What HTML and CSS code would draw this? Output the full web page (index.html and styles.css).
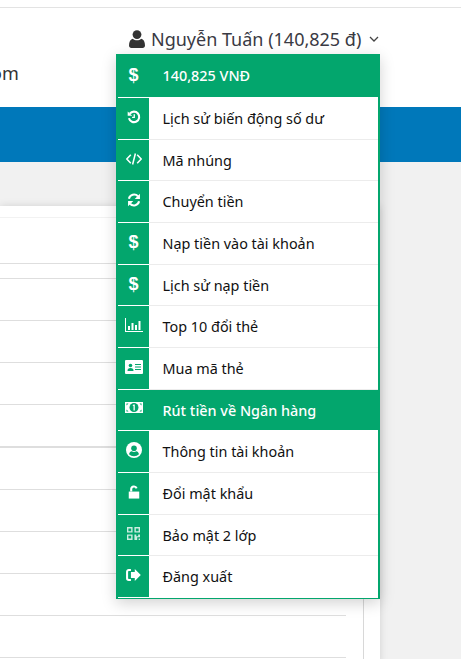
FILE: index.html
```html
<!DOCTYPE html>
<html lang="vi">
<head>
<meta charset="utf-8">
<title>Tài khoản</title>
<link rel="stylesheet" href="styles.css">
</head>
<body>
<div class="topbar"></div>
<header class="header">
  <div class="user-row">
    <div class="user">
      <svg class="user-icon" viewBox="0 0 16 18"><circle cx="8" cy="4.6" r="4.4"/><path d="M0 15.5C0 11.5 1.500 9.300 3.800 8.700 5 9.800 6.400 10.300 8 10.300S11 9.800 12.200 8.700C14.500 9.300 16 11.500 16 15.500 16 17 15 18 13.600 18H2.400C1 18 0 17 0 15.500Z"/></svg>
      <span class="user-name">Nguyễn Tuấn (140,825 đ)</span>
      <svg class="chevron" viewBox="0 0 10 6"><path d="M1 1l4 4 4-4"/></svg>
      <nav class="menu">
        <a class="item item-green"><span class="ico"><span class="dollar">$</span></span><span class="label label-strong">140,825 VNĐ</span></a>
        <a class="item"><span class="ico"><svg viewBox="0 0 16 16"><path class="line thick" d="M3.200 4.200A6 6 0 1 1 2.200 9.500"/><path class="fill" d="M0.800 1.800L6 6.600H0.800Z"/><path class="line" d="M8.300 4.800V8.500H5.800"/></svg></span><span class="label">Lịch sử biến động số dư</span></a>
        <a class="item"><span class="ico"><svg class="svg-code" viewBox="0 0 16 16"><path class="line" d="M4.800 3.800L0.800 8l4 4.200M11.200 3.800L15.200 8l-4 4.200M9.400 2.500L6.600 13.500"/></svg></span><span class="label">Mã nhúng</span></a>
        <a class="item"><span class="ico"><svg viewBox="0 0 16 16"><path class="line thick" d="M2.200 6.500A6 6 0 0 1 12.500 3.800M13.800 9.500A6 6 0 0 1 3.500 12.200"/><path class="fill" d="M14.800 0.800V6.800H8.800ZM1.200 15.200V9.200H7.200Z"/></svg></span><span class="label">Chuyển tiền</span></a>
        <a class="item"><span class="ico"><span class="dollar">$</span></span><span class="label">Nạp tiền vào tài khoản</span></a>
        <a class="item"><span class="ico"><span class="dollar">$</span></span><span class="label">Lịch sử nạp tiền</span></a>
        <a class="item"><span class="ico"><svg class="svg-wide" viewBox="0 0 18 14"><path class="fill" d="M0 0H1V13H18V14H0ZM3 8H5V12H3ZM6.500 5H8.500V12H6.500ZM10 7H12V12H10ZM13.500 3H15.500V12H13.500Z"/></svg></span><span class="label">Top 10 đổi thẻ</span></a>
        <a class="item"><span class="ico"><svg class="svg-wide" viewBox="0 0 18 14"><path class="fill" d="M1 0H17A1 1 0 0 1 18 1V13A1 1 0 0 1 17 14H1A1 1 0 0 1 0 13V1A1 1 0 0 1 1 0Z"/><circle class="hole" cx="5.500" cy="5.500" r="1.800"/><path class="hole" d="M2.500 11C2.500 8.800 3.500 8 5.500 8S8.500 8.800 8.500 11Z"/><path class="hole" d="M10 4H16V5H10ZM10 6.500H16V7.500H10ZM10 9H16V10H10Z"/></svg></span><span class="label">Mua mã thẻ</span></a>
        <a class="item item-green"><span class="ico"><svg class="svg-money" viewBox="0 0 18 11"><path class="fill" d="M0 0H18V11H0Z"/><ellipse class="hole" cx="9" cy="5.500" rx="4.500" ry="4.500"/><path class="hole" d="M1.500 1.500H3.500L1.500 3.500ZM16.500 1.500H14.500L16.500 3.500ZM1.500 9.500H3.500L1.500 7.500ZM16.500 9.500H14.500L16.500 7.500Z"/><path class="fill" d="M8.500 2.500H9.800V8.500H8.500ZM7.500 3.500L8.500 2.500V4Z"/></svg></span><span class="label label-strong">Rút tiền về Ngân hàng</span></a>
        <a class="item"><span class="ico"><svg class="svg-circle" viewBox="0 0 16 16"><circle class="fill" cx="8" cy="8" r="8"/><circle class="hole" cx="8" cy="6.200" r="2.800"/><path class="hole" d="M3 12.300C3.400 10.300 4.600 9.500 5.800 9.300 6.400 9.800 7.200 10 8 10S9.600 9.800 10.200 9.300C11.400 9.500 12.600 10.300 13 12.300 11.700 13.600 10 14.300 8 14.300S4.300 13.600 3 12.300Z"/></svg></span><span class="label">Thông tin tài khoản</span></a>
        <a class="item"><span class="ico"><svg viewBox="0 0 16 16"><path class="line thick" d="M4.800 7.500V4.500A3.200 3.200 0 0 1 11 3.800"/><path class="fill" d="M2 7.500H14V15.500H2Z"/></svg></span><span class="label">Đổi mật khẩu</span></a>
        <a class="item"><span class="ico"><svg class="qr" viewBox="0 0 14 14"><path class="fill" d="M0 0H6V6H0ZM8 0H14V6H8ZM0 8H6V14H0ZM8 8H10V10H12V8H14V11H11V14H8ZM12.500 12.500H14V14H12.500Z"/><path class="hole" d="M1.500 1.500H4.500V4.500H1.500ZM9.500 1.500H12.500V4.500H9.500ZM1.500 9.500H4.500V12.500H1.500Z"/></svg></span><span class="label">Bảo mật 2 lớp</span></a>
        <a class="item"><span class="ico"><svg class="svg-out" viewBox="0 0 17 14"><path class="fill" d="M10 3.500H5.500V10.500H10V14L17 7 10 0Z"/><path class="line thick" d="M5.500 1.200H3A2 2 0 0 0 1 3.200V10.800A2 2 0 0 0 3 12.800H5.500"/></svg></span><span class="label">Đăng xuất</span></a>
      </nav>
    </div>
  </div>
  <div class="site">om</div>
</header>
<div class="navbar"></div>
<main class="content">
  <section class="card">
    <div class="panel">
      <div class="row row-first"></div>
      <div class="row row-short"></div>
      <div class="row"></div>
      <div class="row"></div>
      <div class="row"></div>
      <div class="row row-thick"></div>
      <div class="row"></div>
      <div class="row"></div>
      <div class="row"></div>
      <div class="row"></div>
      <div class="row"></div>
    </div>
  </section>
</main>
</body>
</html>
```

FILE: styles.css
```css
* { box-sizing: border-box; }
html, body { margin: 0; height: 659px; overflow: hidden; }
body { background: #f1f1f1; font-family: "Noto Sans", "DejaVu Sans", sans-serif; color: #333; }

.topbar { height: 8px; background: #fff; border-bottom: 1px solid #e3e3e3; }

.header { height: 99px; background: #fff; display: flex; flex-direction: column; }
.user-row { height: 46px; display: flex; justify-content: flex-end; padding-right: 81px; }
.user { position: relative; display: flex; align-items: center; align-self: flex-end; height: 24px; margin-bottom: 3px; width: 264px; padding-left: 13px; }
.user-icon { width: 16px; height: 18px; fill: #333; margin-right: 6px; flex: none; }
.user-name { font-size: 18px; line-height: 24px; white-space: nowrap; color: #3a3a44; }
.chevron { width: 10px; height: 6px; margin-left: 7.500px; fill: none; stroke: #444; stroke-width: 1.300; flex: none; }

.site { font-size: 18px; line-height: 24px; margin: 7px 0 0 -9px; color: #333; }

.menu { position: absolute; top: 27px; left: 0; width: 264px; height: 545px; background: #fff; border: 2px solid #03a66d; border-top: 0; box-shadow: 0 4px 14px rgba(0, 0, 0, 0.18); display: flex; flex-direction: column; }
.item { display: flex; align-items: stretch; height: 41.670px; border-bottom: 1px solid #ececec; color: #111; font-size: 14.400px; flex: none; }
.item:first-child { height: 44px; }
.item-green { background: #03a66d; color: #fff; border-bottom-color: #fff; }
.item:last-child { border-bottom-color: #fff; }
.ico { width: 31px; flex: none; background: #03a66d; color: #fff; display: flex; justify-content: center; align-items: flex-start; padding-top: 12px; box-shadow: 0 1px 0 #fff; }
.item:first-child .ico { padding-top: 14px; }
.ico svg { width: 14px; height: 14px; display: block; }
.ico svg.svg-code { width: 16px; height: 16px; margin-top: -1px; }
.ico svg.svg-wide { width: 18px; height: 14px; }
.ico svg.svg-money { width: 18px; height: 11px; }
.ico svg.svg-circle { width: 16px; height: 16px; margin-top: -1px; }
.ico svg.svg-out { width: 15px; height: 12px; margin-top: 1px; }
.ico svg.qr { width: 13px; height: 13px; opacity: .8; }
.dollar { font-family: "Liberation Sans", sans-serif; font-weight: 700; font-size: 18px; line-height: 19px; margin-top: -2px; }
.fill { fill: #fff; }
.hole { fill: #03a66d; }
.line { fill: none; stroke: #fff; stroke-width: 1.500; }
.thick { stroke-width: 2.400; }
.label { margin-left: 13.500px; line-height: 41px; white-space: nowrap; }
.item:first-child .label { line-height: 43px; }
.label-strong { font-weight: 500; }

.navbar { height: 55px; background: #0078ba; }

.content { padding: 44px 81px 0 0; }
.card { background: #fff; box-shadow: 0 0 8px rgba(0, 0, 0, 0.13); height: 460px; padding-top: 11px; }
.panel { border-top: 1px solid #f2f2f2; border-right: 1px solid #d8d8d8; margin-right: 16px; padding-right: 17px; height: 449px; }
.row { height: 42px; border-bottom: 1px solid #dedede; }
.row-first { height: 46px; }
.row-short { height: 15px; }
.row-thick { border-bottom-width: 2px; height: 43px; }
```
